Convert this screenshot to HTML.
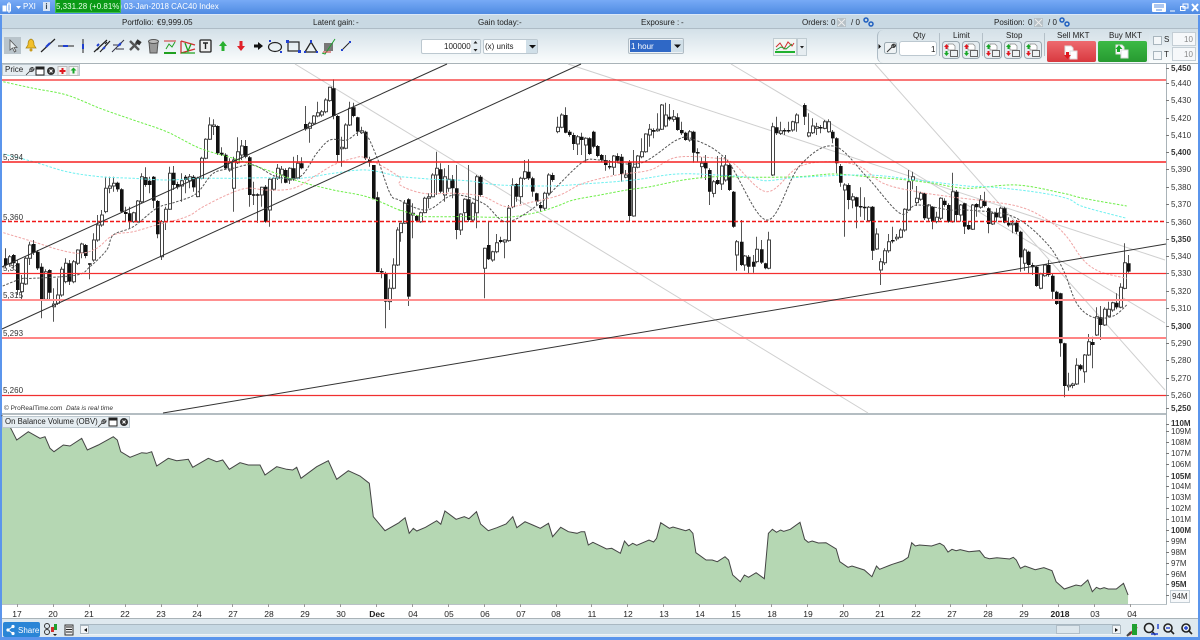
<!DOCTYPE html>
<html><head><meta charset="utf-8"><title>PXI</title>
<style>
html,body{margin:0;padding:0;width:1200px;height:640px;overflow:hidden;background:#fff}
body{position:relative;font-family:"Liberation Sans",sans-serif;font-size:8px;color:#222}
.a{position:absolute}
.t{position:absolute;line-height:12px;white-space:nowrap}
.b{font-weight:bold}
.p{left:1171px;font-size:8px;color:#333;margin-top:1px}
.x{top:608px;width:30px;text-align:center;color:#222;font-size:8.5px}
.l{left:3px;font-size:8px;color:#333;background:none}
svg{position:absolute;left:0;top:0}
</style></head>
<body>
<div class="a" style="left:0;top:0;width:1200px;height:14px;background:linear-gradient(#77aaf6,#4f8be2)"></div>
<div class="a" style="left:0;top:14px;width:1200px;height:1px;background:#dbe8f8"></div>
<div class="a" style="left:0;top:15px;width:1200px;height:13px;background:#c9d9e3"></div>
<div class="a" style="left:0;top:28px;width:1200px;height:1px;background:#aebcc6"></div>
<div class="a" style="left:0;top:29px;width:1200px;height:34px;background:linear-gradient(#d3e0e8,#fbfdfd)"></div>
<div class="a" style="left:0;top:63px;width:1200px;height:1px;background:#a9b3b8"></div>
<div class="a" style="left:2px;top:64px;width:1164px;height:349px;background:#fff"></div>
<div class="a" style="left:1166px;top:64px;width:1px;height:540px;background:#a9b3b8"></div>
<div class="a" style="left:2px;top:413px;width:1164px;height:2px;background:#b4bdc2"></div>
<div class="a" style="left:2px;top:604px;width:1165px;height:1px;background:#b9c2c6"></div>
<div class="a" style="left:2px;top:618px;width:1196px;height:1px;background:#a9b3b8"></div>
<div class="a" style="left:0;top:619px;width:1200px;height:18px;background:#dfe9ef"></div>
<div class="a" style="left:80px;top:624px;width:1040px;height:11px;background:#c6d8e3;border-top:1px solid #a9b8c2;border-bottom:1px solid #eef3f6;box-sizing:border-box"></div>
<div class="a" style="left:1056px;top:625px;width:24px;height:9px;background:#dce6ec;border:1px solid #b0bec8;box-sizing:border-box"></div>
<div class="a" style="left:80px;top:625px;width:9px;height:9px;background:#f2f5f7;border:1px solid #aab6be;box-sizing:border-box"></div>
<div class="a" style="left:1112px;top:625px;width:9px;height:9px;background:#f2f5f7;border:1px solid #aab6be;box-sizing:border-box"></div>
<div class="a" style="left:0;top:637px;width:1200px;height:3px;background:#5b95ec"></div>
<div class="a" style="left:0;top:15px;width:2px;height:625px;background:#5b95ec"></div>
<div class="a" style="left:1198px;top:15px;width:2px;height:625px;background:#5b95ec"></div>

<svg id="c" width="1200" height="640" viewBox="0 0 1200 640"></svg>

<!-- title bar -->
<div class="t" style="left:23px;top:1px;color:#fff">PXI</div>
<div class="a" style="left:43px;top:2px;width:7px;height:9px;background:#d8e4f4;color:#345;font:bold 8px/9px 'Liberation Sans',sans-serif;text-align:center">i</div>
<div class="t" style="left:56px;top:0;width:64px;height:12px;line-height:13px;background:#0b9a16;color:#e8ffe8;text-align:center;outline:1px solid #3fbf4a">5,331.28 (+0.81%)</div>
<div class="t" style="left:124px;top:1px;color:#fff">03-Jan-2018 CAC40 Index</div>

<!-- status row -->
<div class="t" style="left:122px;top:17px">Portfolio:</div><div class="t" style="left:157px;top:17px">€9,999.05</div>
<div class="t" style="left:313px;top:17px">Latent gain:</div><div class="t" style="left:356px;top:17px">-</div>
<div class="t" style="left:478px;top:17px">Gain today:</div><div class="t" style="left:519px;top:17px">-</div>
<div class="t" style="left:641px;top:17px">Exposure :</div><div class="t" style="left:681px;top:17px">-</div>
<div class="t" style="left:802px;top:17px">Orders:</div><div class="t" style="left:831px;top:17px">0</div><div class="t" style="left:851px;top:17px">/ 0</div>
<div class="t" style="left:994px;top:17px">Position:</div><div class="t" style="left:1028px;top:17px">0</div><div class="t" style="left:1048px;top:17px">/ 0</div>

<!-- quantity controls -->
<div class="a" style="left:421px;top:39px;width:60px;height:15px;background:#fff;border:1px solid #bcc8d0;border-radius:2px;box-sizing:border-box"></div>
<div class="a" style="left:471px;top:40px;width:9px;height:13px;background:#e4ecf1"></div>
<div class="t" style="left:444px;top:41px">100000</div>
<div class="a" style="left:483px;top:39px;width:55px;height:15px;background:#fff;border:1px solid #bcc8d0;border-radius:2px;box-sizing:border-box"></div>
<div class="a" style="left:526px;top:40px;width:11px;height:13px;background:#d0dfe8"></div>
<div class="t" style="left:485px;top:41px">(x) units</div>
<div class="a" style="left:628px;top:38px;width:56px;height:16px;background:#eef2f5;border:1px solid #b0bcc4;border-radius:2px;box-sizing:border-box"></div>
<div class="a" style="left:630px;top:40px;width:41px;height:12px;background:#2f68c6"></div>
<div class="a" style="left:671px;top:40px;width:12px;height:12px;background:#d0dfe8"></div>
<div class="t" style="left:631px;top:41px;color:#fff">1 hour</div>
<div class="a" style="left:773px;top:38px;width:24px;height:18px;background:#f2f6f4;border:1px solid #c0ccd2;box-sizing:border-box"></div>
<div class="a" style="left:797px;top:38px;width:10px;height:18px;background:#e6edf1;border:1px solid #c0ccd2;box-sizing:border-box"></div>

<!-- order panel -->
<div class="a" style="left:877px;top:30px;width:272px;height:33px;background:linear-gradient(#d5e1e8,#f1f5f7);border-left:1px solid #aebcc6;border-radius:6px 0 0 6px;box-sizing:border-box"></div>
<div class="t" style="left:913px;top:30px">Qty</div>
<div class="t" style="left:953px;top:30px">Limit</div>
<div class="t" style="left:1006px;top:30px">Stop</div>
<div class="t" style="left:1057px;top:30px">Sell MKT</div>
<div class="t" style="left:1109px;top:30px">Buy MKT</div>
<div class="a" style="left:899px;top:41px;width:38px;height:15px;background:#fff;border:1px solid #bcc8d0;border-radius:3px;box-sizing:border-box"></div>
<div class="t" style="left:931px;top:44px">1</div>
<div class="a" style="left:1047px;top:41px;width:49px;height:21px;background:linear-gradient(#ee6a6f,#d8393f);border-radius:2px"></div>
<div class="a" style="left:1098px;top:41px;width:49px;height:21px;background:linear-gradient(#3cba46,#279a31);border-radius:2px"></div>
<div class="a" style="left:1153px;top:36px;width:7px;height:7px;background:#f4f7f9;border:1px solid #a9b6be"></div>
<div class="a" style="left:1153px;top:51px;width:7px;height:7px;background:#f4f7f9;border:1px solid #a9b6be"></div>
<div class="t" style="left:1164px;top:34px">S</div>
<div class="t" style="left:1164px;top:49px">T</div>
<div class="a" style="left:1172px;top:32px;width:24px;height:14px;background:#f6f8fa;border:1px solid #c4ced5;box-sizing:border-box"></div>
<div class="a" style="left:1172px;top:47px;width:24px;height:14px;background:#f6f8fa;border:1px solid #c4ced5;box-sizing:border-box"></div>
<div class="t" style="left:1184px;top:34px;color:#888">10</div>
<div class="t" style="left:1184px;top:49px;color:#888">10</div>

<!-- tabs -->
<div class="a" style="left:2px;top:64px;width:78px;height:12px;background:#e6edf1;border:1px solid #bcc7ce;box-sizing:border-box"></div>
<div class="t" style="left:5px;top:64px;font-size:8px">Price</div>
<div class="a" style="left:2px;top:416px;width:128px;height:12px;background:#e6edf1;border:1px solid #bcc7ce;box-sizing:border-box"></div>
<div class="t" style="left:5px;top:416px;font-size:7.8px">On Balance Volume (OBV)</div>

<!-- left level labels -->
<div class="t l" style="top:152px">5,394</div>
<div class="t l" style="top:212px">5,360</div>
<div class="t l" style="top:263px">5,33</div>
<div class="t l" style="top:290px">5,315</div>
<div class="t l" style="top:328px">5,293</div>
<div class="t l" style="top:385px">5,260</div>
<div class="t" style="left:4px;top:403px;font-size:6.5px;color:#333">© ProRealTime.com&nbsp; <i>Data is real time</i></div>

<!-- price axis -->
<div class="t p b" style="top:62px">5,450</div><div class="t p" style="top:77px">5,440</div><div class="t p" style="top:94px">5,430</div><div class="t p" style="top:112px">5,420</div><div class="t p" style="top:129px">5,410</div><div class="t p b" style="top:146px">5,400</div><div class="t p" style="top:163px">5,390</div><div class="t p" style="top:181px">5,380</div><div class="t p" style="top:198px">5,370</div><div class="t p" style="top:216px">5,360</div><div class="t p b" style="top:233px">5,350</div><div class="t p" style="top:250px">5,340</div><div class="t p" style="top:267px">5,330</div><div class="t p" style="top:285px">5,320</div><div class="t p" style="top:302px">5,310</div><div class="t p b" style="top:320px">5,300</div><div class="t p" style="top:337px">5,290</div><div class="t p" style="top:354px">5,280</div><div class="t p" style="top:372px">5,270</div><div class="t p" style="top:389px">5,260</div><div class="t p b" style="top:402px">5,250</div>

<!-- OBV axis -->
<div class="t p b" style="top:417px">110M</div><div class="t p" style="top:425px">109M</div><div class="t p" style="top:436px">108M</div><div class="t p" style="top:447px">107M</div><div class="t p" style="top:458px">106M</div><div class="t p b" style="top:470px">105M</div><div class="t p" style="top:480px">104M</div><div class="t p" style="top:491px">103M</div><div class="t p" style="top:502px">102M</div><div class="t p" style="top:513px">101M</div><div class="t p b" style="top:524px">100M</div><div class="t p" style="top:535px">99M</div><div class="t p" style="top:546px">98M</div><div class="t p" style="top:557px">97M</div><div class="t p" style="top:568px">96M</div><div class="t p b" style="top:578px">95M</div>
<div class="t p" style="top:589px;left:1170px;border:1px solid #c4ced5;padding:0 1px;background:#f6f8fa;line-height:11px">94M</div>

<!-- date axis -->
<div class="t x" style="left:2px">17</div><div class="t x" style="left:38px">20</div><div class="t x" style="left:74px">21</div><div class="t x" style="left:110px">22</div><div class="t x" style="left:146px">23</div><div class="t x" style="left:182px">24</div><div class="t x" style="left:218px">27</div><div class="t x" style="left:254px">28</div><div class="t x" style="left:290px">29</div><div class="t x" style="left:326px">30</div><div class="t x b" style="left:362px">Dec</div><div class="t x" style="left:398px">04</div><div class="t x" style="left:434px">05</div><div class="t x" style="left:470px">06</div><div class="t x" style="left:506px">07</div><div class="t x" style="left:541px">08</div><div class="t x" style="left:577px">11</div><div class="t x" style="left:613px">12</div><div class="t x" style="left:649px">13</div><div class="t x" style="left:685px">14</div><div class="t x" style="left:721px">15</div><div class="t x" style="left:757px">18</div><div class="t x" style="left:793px">19</div><div class="t x" style="left:829px">20</div><div class="t x" style="left:865px">21</div><div class="t x" style="left:901px">22</div><div class="t x" style="left:937px">27</div><div class="t x" style="left:973px">28</div><div class="t x" style="left:1009px">29</div><div class="t x b" style="left:1045px">2018</div><div class="t x" style="left:1080px">03</div><div class="t x" style="left:1117px">04</div>

<!-- share -->
<div class="a" style="left:3px;top:622px;width:37px;height:15px;background:#2a85d6;border-radius:2px"></div>
<div class="t" style="left:18px;top:625px;color:#fff">Share</div>

<svg width="1200" height="640" viewBox="0 0 1200 640">
<!-- title icons -->
<g fill="#fff" stroke="#fff"><rect x="3" y="6" width="3" height="5"/><path d="M9 2V13" fill="none"/><rect x="7.5" y="4" width="3" height="7" fill="none"/><path d="M16 6h5l-2.500 3z" stroke="none"/></g>
<g fill="#fff"><rect x="1152" y="3" width="14" height="9" rx="1"/></g>
<path d="M1154 5h10M1154 7h10M1156 10h6" stroke="#5b8fe0" fill="none"/>
<path d="M1170 11h5M1183 4h5v4h-5zM1180.500 6.500h4.500v4h-4.500z" stroke="#fff" fill="none"/>
<path d="M1192 4l6 7M1198 4l-6 7" stroke="#fff" stroke-width="2"/>
<!-- status icons -->
<g><rect x="837" y="18" width="9" height="9" fill="#b6c0c6"/><path d="M838 19l7 7M845 19l-7 7" stroke="#eee"/><rect x="1034" y="18" width="9" height="9" fill="#b6c0c6"/><path d="M1035 19l7 7M1042 19l-7 7" stroke="#eee"/></g>
<g fill="none" stroke="#2060c0" stroke-width="1.500"><circle cx="866" cy="20" r="2"/><circle cx="871" cy="24" r="2"/><circle cx="1062" cy="20" r="2"/><circle cx="1067" cy="24" r="2"/></g>
<!-- toolbar -->
<rect x="4" y="37" width="17" height="17" fill="#b9c4cb"/>
<path d="M10 40v10l2.500-2 2 4 1.500-1-2-3.500h3z" fill="#e8eef0" stroke="#555" stroke-width=".8"/>
<path d="M31 39c-3 1-3 4-3 6l-2 3h10l-2-3c0-2 0-5-3-6z" fill="#f2c02c" stroke="#a98515" stroke-width=".7"/><circle cx="31" cy="50" r="1.500" fill="#c89a1c"/>
<path d="M41 52L55 39" stroke="#222" stroke-width="1.200"/><path d="M46 47l4-4" stroke="#2040d0" stroke-width="2"/>
<path d="M58 46h16" stroke="#222"/><rect x="63" y="45" width="5" height="2" fill="#2040d0"/>
<path d="M83 39v14" stroke="#222"/><rect x="82" y="44" width="2" height="5" fill="#2040d0"/>
<path d="M94 52L107 40M100 52L110 41M97 50l2-2M105 44l2-2" stroke="#222" stroke-width="1.200"/><path d="M97 46l2-2M103 49l2-2" stroke="#2040d0" stroke-width="2"/>
<path d="M112 52L124 40M116 49h8M113 45h8" stroke="#334" /><path d="M118 46l3-3" stroke="#2040d0" stroke-width="2"/>
<path d="M130 41l9 9M139 41l-9 9" stroke="#555" stroke-width="2.400"/><rect x="136" y="40" width="5" height="4" fill="#333" transform="rotate(35 138 42)"/>
<path d="M149 42h9l-1 11h-7z" fill="#999" stroke="#555"/><ellipse cx="153.500" cy="41.500" rx="5" ry="2" fill="#bbb" stroke="#555"/>
<path d="M164 41h12" stroke="#d03030" stroke-width="1"/><path d="M164 53h12" stroke="#20a020" stroke-width="2"/><path d="M166 49l3-5 3 3 3-5" stroke="#20a020" fill="none"/>
<path d="M181 41l14 4M181 41v12l14-4" stroke="#d03030" fill="none" stroke-width="1.300"/><path d="M181 53h14M185 43l3 8 3-7" stroke="#20a020" fill="none" stroke-width="1.300"/>
<rect x="200" y="40" width="11" height="12" rx="1" fill="#eee" stroke="#222" stroke-width="1.300"/><path d="M203 43h5M205.500 43v6" stroke="#222" stroke-width="1.400"/>
<path d="M223 41l4 5h-2.500v5h-3v-5H219z" fill="#28b030"/>
<path d="M239.500 41h3v5h2.500l-4 5-4-5h2.500z" fill="#e02028"/>
<path d="M254 44.500h4V42l5 4-5 4v-2.500h-4z" fill="#111"/>
<ellipse cx="275" cy="47" rx="6.500" ry="4.500" fill="none" stroke="#222" stroke-width="1.200"/><path d="M269 40h2v2h-2zM280 51h2v2h-2z" fill="#2040d0"/>
<rect x="288" y="42" width="11" height="9" fill="none" stroke="#222" stroke-width="1.200"/><path d="M286 40h3v3h-3zM298 50h3v3h-3z" fill="#2040d0"/>
<path d="M311 42l6 10h-12z" fill="none" stroke="#222" stroke-width="1.300"/><path d="M310 40h2v3h-2zM304 51h2v2h-2zM316 51h2v2h-2z" fill="#2040d0"/>
<rect x="324" y="43" width="9" height="8" fill="#777"/><path d="M322 53l3 1 10-15" stroke="#20a030" fill="none"/><path d="M323 52h8" stroke="#d03030"/>
<path d="M342 50l8-8" stroke="#222"/><path d="M341 49h2v2h-2zM349 41h2v2h-2z" fill="#2040d0"/>
<path d="M473.500 43.500l2-2.500 2 2.500zM473.500 49l2 2.500 2-2.500z" fill="#222"/>
<path d="M529 45h7l-3.500 3.500zM674 44.500h7l-3.500 3.500z" fill="#111"/>
<path d="M775 52h20" stroke="#20b030" stroke-width="2"/><path d="M776 47l4-4 4 6 4-7 4 4 2-3" stroke="#d03030" fill="none"/><path d="M776 50l5-3 5 2 6-5" stroke="#20a030" fill="none"/><path d="M800 46h4l-2 2.500z" fill="#222"/>
<!-- order panel -->
<path d="M878.500 44l2.500 2.500-2.500 2.500z" fill="#111"/>
<rect x="884.500" y="42.500" width="12" height="11" rx="2" fill="#eef2f4" stroke="#9aa8b0"/><path d="M887 52l5-5M892 47c-1-2 1-3 2.500-2.800l-1.500 1.500 1 1 1.500-1.500c.2 1.500-1.500 3-3.500 1.800z" stroke="#333" fill="none"/>
<g id="oa"></g>
<path d="M939.500 33v23M982.500 33v23M1044.500 33v23" stroke="#b4c0c8"/>
<g fill="#fff" stroke="#ddd"><path d="M1065 46h6l2 2v7h-8z"/><rect x="1070" y="51" width="7" height="8"/><path d="M1116 45h6l2 2v7h-8z"/><rect x="1121" y="50" width="7" height="8"/></g>
<path d="M1066 52h3v3h2l-3.500 4-3.500-4h2z" fill="#e01820"/><path d="M1119 45l3.500 4H1120v3h-3v-3h-1.500z" fill="#18a828"/>
<!-- tab icons -->
<path d="M26 75l4-4M30 71c-1-2 1-4 3-3.500l-2 2 1 1 2-2c.5 2-2 4-4 2.500z" stroke="#333" fill="none" stroke-width=".8"/>
<rect x="36" y="67" width="8" height="8" fill="#fff" stroke="#222"/><path d="M36 68.500h8" stroke="#222" stroke-width="2"/>
<circle cx="51" cy="71" r="4" fill="#333"/><path d="M49.500 69.500l3 3M52.500 69.500l-3 3" stroke="#fff"/>
<rect x="58" y="66.500" width="9" height="9" fill="#f4f4f4" stroke="#bbb"/><path d="M61.500 68h2v2h2v2h-2v2h-2v-2h-2v-2h2z" fill="#e01820"/>
<rect x="69" y="66.500" width="9" height="9" fill="#f4f4f4" stroke="#bbb"/><path d="M73.500 67.500l3 3h-2v3h-2v-3h-2z" fill="#18a828"/>
<path d="M98 427l4-4M102 423c-1-2 1-4 3-3.500l-2 2 1 1 2-2c.5 2-2 4-4 2.500z" stroke="#333" fill="none" stroke-width=".8"/>
<rect x="109" y="418" width="8" height="8" fill="#fff" stroke="#222"/><path d="M109 419.500h8" stroke="#222" stroke-width="2"/>
<circle cx="124" cy="422" r="4" fill="#333"/><path d="M122.500 420.500l3 3M125.500 420.500l-3 3" stroke="#fff"/>
<!-- bottom icons -->
<g fill="#fff"><circle cx="8" cy="630" r="1.600"/><circle cx="13" cy="626.500" r="1.600"/><circle cx="13" cy="633.500" r="1.600"/></g><path d="M8 630l5-3.500M8 630l5 3.500" stroke="#fff"/>
<circle cx="47" cy="626" r="2.500" fill="none" stroke="#333"/><circle cx="47" cy="632" r="2.500" fill="none" stroke="#333"/><rect x="51" y="627" width="3" height="5" fill="#d03030"/><rect x="54" y="624" width="3" height="6" fill="#20a030"/><path d="M53 634h4l-2 2z" fill="#222"/>
<rect x="65" y="625" width="8" height="10" fill="#eee" stroke="#333"/><path d="M66 627h6M66 629.500h6M66 632h6" stroke="#222"/>
<path d="M1115 628l3 2-3 2z" fill="#111"/><path d="M87 628l-3 2 3 2z" fill="#111"/>
<path d="M1129 635l8-8" stroke="#d03030" stroke-width="2"/><rect x="1132" y="624" width="5" height="11" fill="#20a030"/><path d="M1127 636l4-4" stroke="#444" stroke-width="2"/>
<g fill="#e8eef0" stroke="#222" stroke-width="1.600"><circle cx="1149" cy="628" r="4.500"/><path d="M1152.500 632l3 3" fill="none"/><circle cx="1168" cy="628" r="4"/><path d="M1171 631l3 3" fill="none"/><circle cx="1186" cy="628" r="4"/><path d="M1189 631l3 3" fill="none"/></g>
<path d="M1158 624v5M1158 634h-7" stroke="#2040d0" stroke-width="1.400"/><path d="M1166 628h4" stroke="#2040d0" stroke-width="1.400"/><path d="M1184 628h4M1186 626v4" stroke="#2040d0" stroke-width="1.400"/>
</svg>

<script>
(function(){
var ns='http://www.w3.org/2000/svg',c=document.getElementById('c');
function add(n,o,p){var e=document.createElementNS(ns,n);for(var k in o)e.setAttribute(k,o[k]);(p||c).appendChild(e);return e}
function pts(x0,y0,sx,sy,a){var s=[];for(var i=0;i<a.length;i+=2)s.push((x0+a[i]/sx).toFixed(1)+','+(y0+a[i+1]/sy).toFixed(1));return s.join(' ')}
/* OBV */
var o=pts(0,410,3,3,[6,18,18,26,30,50,50,90,85,65,120,85,135,80,150,115,162,125,190,105,210,108,245,85,262,120,295,105,340,80,352,90,362,125,390,142,425,128,440,130,455,125,470,168,505,145,530,152,565,148,578,172,625,145,650,155,668,150,688,178,720,158,745,165,780,165,795,195,830,170,860,178,878,180,890,172,903,205,950,170,985,152,1010,208,1045,182,1080,198,1108,220,1120,320,1155,362,1197,338])+' '+
pts(400,480,1.96,3,[0,125,10,113,18,160,26,145,33,153,50,142,72,122,80,133,88,93,110,118,126,110,135,116,150,95,158,132,173,152,190,143,208,132,221,110,229,143,245,125,260,135,275,145,291,130,299,170,315,142,330,155,347,160,355,155,362,155,369,195,378,187,405,207,415,205,432,220,440,183,448,198,456,190,464,196,488,180,497,186,503,175,511,128,528,145,535,141,560,152,567,148,574,160,580,218,600,240,612,240,622,245,637,230,644,240,652,285,667,305,675,285,683,292,698,278,714,296,722,160,730,148,738,157,746,150,752,154,765,148,784,127,793,178,800,187,808,183,820,189,835,188,855,207,862,245,878,262,886,258,910,270,925,290,934,258,940,268,965,253,985,243,996,232,1003,188,1010,198,1018,195,1042,198,1058,190,1066,197,1074,216,1082,208,1090,212,1098,209,1115,215,1136,212,1146,232,1155,236,1170,233,1195,237,1202,232,1208,240,1216,265,1225,258,1245,269,1262,263,1278,272,1286,305,1302,327,1325,315,1335,318,1348,300,1357,335,1365,322,1372,327,1380,323,1388,327,1404,327,1418,310,1427,345]);
add('polygon',{points:'2,415 '+o+' 1128,604 2,604',fill:'#b5d7b3'});
add('polyline',{points:'2,415 '+o,fill:'none',stroke:'#444','stroke-width':1});
/* axis ticks */
var t='';for(var i=0;i<32;i++){var x=17+i*35.9;t+='M'+x.toFixed(0)+'.5 604v3'}
add('path',{d:t,stroke:'#999',fill:'none'});
t='';[68,83,100,118,135,152,169,187,204,222,239,256,273,291,308,326,343,360,378,395,408,424,431,442,453,464,476,486,497,508,519,530,541,552,563,574,584,595].forEach(function(y){t+='M1166 '+y+'.5h3'});
add('path',{d:t,stroke:'#777',fill:'none'});
/* gray trend lines */
[[295,64,868,413],[568,64,1165,260],[731,64,1165,323],[875,64,1165,390]].forEach(function(l){add('line',{x1:l[0],y1:l[1],x2:l[2],y2:l[3],stroke:'#cfcfcf','stroke-width':1})});
/* candles: x top bottom wickTop wickBottom black(1) in zoomed coordinates */
var segs=[
[0,240,'15 55 75 25 85 1,28 50 72 45 80 0,40 45 70 42 85 1,52 70 150 60 165 1,64 130 155 105 180 0,76 55 132 50 135 0,88 15 55 5 75 0,100 12 38 0 45 1,112 35 85 30 90 1,124 80 178 70 235 1,136 95 178 88 182 0,148 90 158 88 180 1,160 192 200 145 245 0,172 165 190 115 195 0,184 88 165 80 170 0,196 70 125 55 130 0,208 70 125 60 135 1,220 65 125 60 130 0,232 30 70 28 75 0,244 12 38 8 55 0,256 15 48 12 55 1,268 70 74 70 118 1'],
[0,60,'280 540 600 520 605 0,290 495 540 465 545 0,304 465 495 450 500 0,316 385 455 350 460 0,328 378 385 350 400 0,340 370 378 350 395 0,352 368 388 365 395 1,364 388 455 385 458 1,376 456 462 440 485 1,388 460 485 440 505 1,400 458 485 455 488 0,412 423 485 420 488 0,424 350 425 340 430 0,436 352 375 322 380 1,448 362 375 350 400 1,460 350 422 348 445 1,472 423 523 420 535 1,484 485 590 480 600 0,496 448 485 440 510 0,508 340 448 320 450 0,520 338 375 318 390 1,532 372 382 365 388 1,544 362 378 340 425 0,556 350 360 345 400 1,568 350 362 342 385 0,580 350 382 345 395 1,592 355 410 350 412 0,604 295 355 290 358 0,616 238 295 235 298 0,628 195 238 172 240 0,640 195 198 178 225 0,652 198 280 196 285 1,664 278 284 262 288 1,676 284 325 280 328 1,688 305 330 295 335 0,700 300 385 290 455 0,712 275 308 232 312 0,724 258 285 240 300 0,736 258 290 240 295 1,748 292 405 288 440 1,760 403 407 365 435 1,772 403 407 400 488 1,784 382 405 380 440 0,796 380 485 375 488 1,808 358 450 355 500 0,820 355 388 350 392 0,832 325 355 312 360 0,844 328 345 318 370 0,856 330 368 325 370 1,868 325 360 322 372 0,880 325 358 290 362 1,892 310 355 285 358 0,904 310 325 292 328 1,916 192 208 138 212 1,928 190 205 185 248 0,940 168 190 165 195 0,952 158 168 125 172 0,964 155 165 150 170 0,976 120 155 115 160 0,988 82 122 80 125 0,1000 85 168 58 178 1,1012 168 285 165 305 1,1024 262 265 230 320 0,1036 195 265 190 268 0,1048 145 195 125 198 0,1060 142 168 128 172 1,1072 172 215 170 228 1,1084 212 218 200 222 0,1096 215 295 212 300 1,1108 298 308 290 320 1,1120 315 418 395 345 1,1132 412 636 395 636 1'],
[0,240,'1144 93 97 85 115 1,1156 100 185 95 265 1,1168 145 185 118 210 0,1180 75 145 55 148 0,1192 -30 75 -38 78 0'],
[400,80,'0 430 458 428 485 0,12 370 430 360 432 0,24 358 650 355 678 1,36 400 405 370 475 0,48 408 422 405 425 1,60 398 425 395 428 0,72 355 398 350 400 0,84 350 352 340 385 0,96 285 350 280 352 0,108 265 285 215 345 0,120 268 335 250 340 1,132 290 345 265 365 0,144 298 325 255 335 0,156 298 325 285 355 1,168 325 450 255 478 1,180 402 450 400 465 0,192 358 398 355 425 0,204 358 420 255 425 1,216 370 420 365 425 0,228 290 398 285 445 0,240 290 345 285 350 1,252 505 565 503 655 0,264 495 538 425 540 1,276 515 540 512 545 0,288 488 515 462 520 0,300 480 486 470 490 1,312 480 486 478 535 0,324 385 482 375 485 0,336 315 380 295 385 0,348 312 350 310 365 1,360 295 350 290 372 0,372 275 295 240 300 0,384 275 295 238 300 1,396 295 335 290 350 1,408 340 365 338 375 1,420 375 385 365 395 1,432 340 385 335 390 0,444 285 340 280 345 0,456 285 300 278 305 1,470 142 155 110 160 0,482 105 142 100 145 0,494 105 158 82 160 1,506 155 165 150 170 1,518 165 192 158 210 1,530 170 192 165 225 0,542 170 180 158 225 1,554 175 195 172 248 0,566 175 222 172 225 1,578 155 200 152 205 1,590 198 228 195 232 1,602 225 240 222 245 1,614 240 255 225 272 1,626 258 262 240 268 1,638 228 262 225 285 0,650 228 242 220 250 1,662 230 282 222 305 1,674 285 292 270 295 0,686 245 408 240 425 1,698 262 408 210 410 0,710 228 262 225 265 0,722 215 230 175 235 0,734 162 215 160 218 0,746 148 165 132 200 0,758 150 155 145 175 1,770 148 152 100 155 0,782 75 148 72 150 0,794 105 138 68 142 0,806 110 118 72 122 1,818 110 118 90 125 0,830 112 150 100 152 1,842 150 160 125 165 1,854 158 180 155 182 1,866 155 180 150 185 0,878 155 218 152 248 1,890 216 220 205 245 1,902 250 260 232 295 0,914 248 265 225 300 1,926 270 335 265 375 1,938 305 340 300 352 0,950 300 312 228 315 1,962 258 312 230 330 0,974 255 300 225 305 0,986 255 330 250 333 1,998 335 440 333 443 1,1008 485 525 480 572 0,1022 485 555 420 558 1,1033 528 555 525 572 0,1045 530 560 525 580 1,1058 545 560 525 578 1,1068 508 545 470 550 0,1082 508 548 480 552 1,1094 550 565 548 568 1,1104 480 565 455 568 0,1116 140 285 128 288 0,1128 142 160 110 165 1,1140 152 160 125 165 0,1152 150 154 145 165 1,1164 150 154 125 158 1,1176 125 150 122 155 0,1188 105 128 100 155 0'],
[800,80,'12 75 110 70 135 1,24 158 168 100 172 0,36 138 158 115 162 0,48 140 145 128 165 0,60 141 145 135 160 1,72 125 145 120 148 0,84 125 155 118 158 0,96 155 175 150 190 1,108 175 250 172 280 1,120 258 308 252 320 1,132 315 330 310 470 0,144 315 360 310 388 1,156 350 360 340 385 0,168 352 380 350 445 1,180 378 382 322 410 1,192 380 384 352 420 1,204 382 422 378 425 0,216 380 512 378 540 1,228 462 507 445 510 0,240 545 570 535 615 0,252 512 548 505 555 0,264 485 512 462 518 0,276 480 484 440 490 1,288 472 476 462 482 0,300 450 472 445 475 0,312 388 450 385 455 0,324 305 390 270 393 0,336 290 300 275 328 0,348 355 368 318 378 0,360 340 358 335 362 0,372 340 415 338 420 1,384 375 415 372 425 0,396 380 425 378 448 1,408 412 425 395 430 0,420 355 415 352 420 0,432 362 375 355 380 1,444 375 425 370 428 1,456 335 425 278 428 0,468 335 405 330 425 1,480 375 405 372 425 0,492 370 440 368 462 1,504 435 448 425 450 1,516 375 448 372 450 0,528 372 382 370 410 1,540 360 382 345 386 0,552 362 378 335 382 1,564 385 432 382 460 1,576 400 432 395 435 0,588 398 412 385 425 1,600 385 412 380 415 0,612 385 428 380 430 1,624 428 436 412 440 1,636 430 434 420 460 0,648 428 455 420 462 1,660 455 532 452 575 1,672 510 550 505 572 0,684 515 555 512 582 1,696 555 562 548 585 1,708 560 618 558 620 1,720 582 625 578 628 0,732 555 587 552 590 0,744 555 585 540 590 1,756 587 635 582 660 1,768 635 672 632 675 1,780 640 790 638 830 1,792 790 918 788 952 1,804 916 920 878 932 0,816 912 916 908 925 0,828 856 912 835 915 0,840 856 868 852 872 1,852 825 875 822 908 0,864 785 825 762 828 0,876 786 795 770 865 1,888 710 765 682 768 0,900 712 735 678 780 1,912 688 735 682 738 0,924 688 708 665 712 0,936 668 690 665 695 0,948 668 682 640 688 1,960 622 682 610 685 0,972 548 625 490 628 0,984 550 575 525 578 1']
];
var wick='',blk='',wht='';
segs.forEach(function(s){s[2].split(',').forEach(function(r){var v=r.split(' ').map(Number),x=Math.round(s[0]+v[0]/3),
 y=function(z){return s[1]+z/3};
 if(v[3]>v[4]){var q=v[3];v[3]=v[4];v[4]=q}
 var tp=y(v[1]),bt=y(v[2]);
 wick+='M'+x+'.5 '+y(v[3]).toFixed(1)+'V'+y(v[4]).toFixed(1);
 var h=Math.max(bt-tp,1.5).toFixed(1);
 if(v[5])blk+='M'+(x-1)+' '+tp.toFixed(1)+'h3.6v'+h+'h-3.6z';
 else wht+='M'+(x-.5)+' '+tp.toFixed(1)+'h3v'+h+'h-3z';
})});
add('path',{d:wick,stroke:'#555','stroke-width':1,fill:'none'});
add('path',{d:wht,stroke:'#444','stroke-width':1,fill:'#fff'});
add('path',{d:blk,fill:'#111'});
/* moving averages, smoothed */
function ma(col,parts){var s=parts.map(function(p){return pts(p[0],p[1],3,3,p[2])}).join(' ').split(' ').map(function(q){return q.split(',').map(Number)});
 var d='M'+s[0][0]+' '+s[0][1];
 for(var i=0;i<s.length-1;i++){var p0=s[Math.max(i-1,0)],p1=s[i],p2=s[i+1],p3=s[Math.min(i+2,s.length-1)];
  d+='C'+(p1[0]+(p2[0]-p0[0])/6).toFixed(1)+' '+(p1[1]+(p2[1]-p0[1])/6).toFixed(1)+' '+(p2[0]-(p3[0]-p1[0])/6).toFixed(1)+' '+(p2[1]-(p3[1]-p1[1])/6).toFixed(1)+' '+p2[0]+' '+p2[1]}
 add('path',{d:d,fill:'none',stroke:col,'stroke-width':1,'stroke-dasharray':'2.500 1.500'})}
ma('#6fee4a',[[0,60,[10,65,100,85,200,105,300,145,400,180,500,215,600,265,700,295,800,330,900,365,1000,390,1100,410,1197,450]],[400,80,[0,390,60,408,100,410,200,410,280,412,340,410,420,395,480,375,520,360,600,345,680,330,750,320,850,300,950,290,1050,292,1197,290]],[800,80,[100,282,200,290,300,298,400,310,500,325,650,315,790,340,850,355,980,378]]]);
ma('#6ef0f0',[[0,60,[10,282,100,305,200,335,300,350,400,355,500,360,600,355,700,355,800,353,900,355,1000,340,1100,330,1197,350]],[400,80,[0,290,100,298,200,302,300,315,450,318,550,312,700,300,830,282,950,285,1050,292,1100,302,1197,292]],[800,80,[200,285,350,300,500,318,560,320,700,335,800,355,850,380,980,415]]]);
ma('#f0a5a5',[[0,60,[10,518,100,545,180,570,240,580,290,565,340,525,400,515,470,495,560,470,610,440,680,405,740,385,800,390,880,385,950,345,1000,315,1060,295,1100,295,1197,350]],[400,80,[0,315,70,340,170,340,250,350,320,380,400,365,480,345,550,310,650,285,750,270,830,232,950,235,1000,250,1100,335,1197,260]],[800,80,[100,245,180,260,250,310,350,335,450,350,650,378,750,425,800,470,850,540,900,575,980,595]]]);
ma('#555',[[0,240,[8,138,40,125,70,115,100,115,230,105,270,80,320,30]],[0,60,[340,525,400,500,470,445,530,425,590,400,640,340,700,325,760,315,830,350,900,350,950,280,990,240,1040,240,1090,215,1130,290,1170,400,1197,420]],[400,80,[80,390,160,345,250,370,320,425,420,370,470,320,550,245,600,240,720,250,830,180,880,178,980,240,1100,420,1197,260]],[800,80,[100,198,200,290,300,400,350,375,450,390,500,390,640,410,740,490,790,570,830,670,880,712,940,708,980,675]]]);
/* horizontal levels */
[[80,'#f52828',1.3],[162,'#f52020',1.4],[273.500,'#f53030',1.3],[300,'#ff9090',2],[338,'#ff8484',2],[395.500,'#f03030',1.3]].forEach(function(l){add('line',{x1:2,x2:1166,y1:l[0],y2:l[0],stroke:l[1],'stroke-width':l[2]})});
add('line',{x1:2,x2:1166,y1:221.500,y2:221.500,stroke:'#f01818','stroke-width':1.400,'stroke-dasharray':'4 2'});
/* black trend lines */
[[2,267,447,64],[2,329,581,64],[163,413,1166,244]].forEach(function(l){add('line',{x1:l[0],y1:l[1],x2:l[2],y2:l[3],stroke:'#333','stroke-width':1})});
/* order buttons */
var oa=document.getElementById('oa');
[[942,'rg'],[962,'rg'],[984,'gr'],[1004,'gr'],[1024,'gr']].forEach(function(b){var x=b[0];
 add('rect',{x:x+.5,y:41.5,width:17,height:17,rx:3,fill:'#e6edf1',stroke:'#9aa8b0'},oa);
 add('path',{d:'M'+(x+6)+' 44h5l2 2v4h-7z',fill:'#fff',stroke:'#888','stroke-width':.7},oa);
 add('rect',{x:x+8.5,y:50.5,width:7,height:6,fill:'#eef2f4',stroke:'#666'},oa);
 add('path',{d:'M'+(x+2)+' 47l2.500-3 2.500 3h-1.500v2h-2v-2z',fill:b[1]=='rg'?'#e01820':'#18a828'},oa);
 add('path',{d:'M'+(x+2)+' 53l2.500 3 2.500-3h-1.500v-2h-2v2z',fill:b[1]=='rg'?'#18a828':'#e01820'},oa);
});
})();
</script>
</body></html>
